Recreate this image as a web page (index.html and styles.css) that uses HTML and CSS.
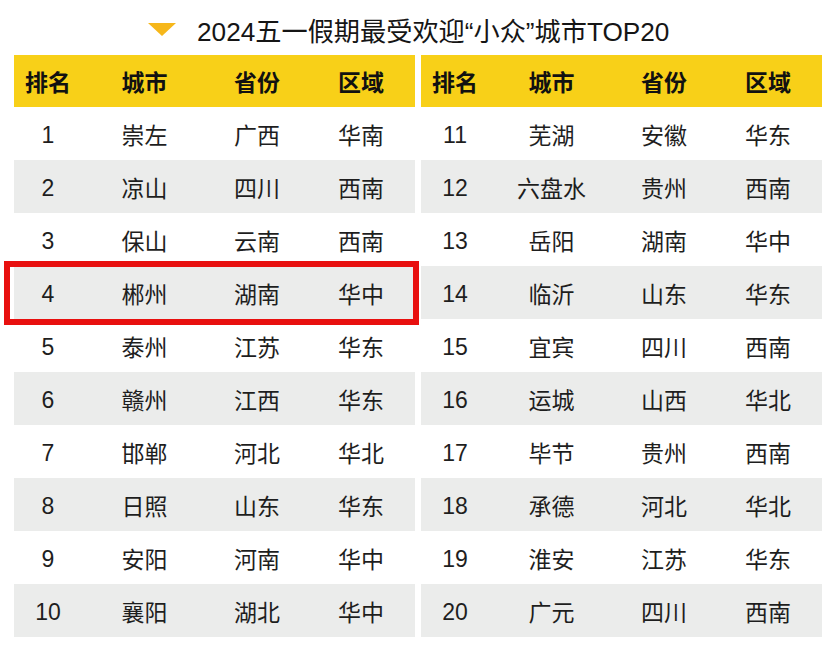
FILE: index.html
```html
<!DOCTYPE html>
<html lang="zh">
<head>
<meta charset="utf-8">
<title>2024五一假期最受欢迎“小众”城市TOP20</title>
<link rel="stylesheet" href="styles.css">
</head>
<body>
<div class="page">
  <h1 class="title"><span class="tri"></span><span class="title-text">2024五一假期最受欢迎“小众”城市TOP20</span></h1>
  <div class="tables">
    <div class="table">
      <div class="row head"><div>排名</div><div>城市</div><div>省份</div><div>区域</div></div>
      <div class="row"><div class="num">1</div><div>崇左</div><div>广西</div><div>华南</div></div>
      <div class="row alt"><div class="num">2</div><div>凉山</div><div>四川</div><div>西南</div></div>
      <div class="row"><div class="num">3</div><div>保山</div><div>云南</div><div>西南</div></div>
      <div class="row alt mark"><div class="num">4</div><div>郴州</div><div>湖南</div><div>华中</div><span class="box"></span></div>
      <div class="row"><div class="num">5</div><div>泰州</div><div>江苏</div><div>华东</div></div>
      <div class="row alt"><div class="num">6</div><div>赣州</div><div>江西</div><div>华东</div></div>
      <div class="row"><div class="num">7</div><div>邯郸</div><div>河北</div><div>华北</div></div>
      <div class="row alt"><div class="num">8</div><div>日照</div><div>山东</div><div>华东</div></div>
      <div class="row"><div class="num">9</div><div>安阳</div><div>河南</div><div>华中</div></div>
      <div class="row alt"><div class="num">10</div><div>襄阳</div><div>湖北</div><div>华中</div></div>
    </div>
    <div class="table">
      <div class="row head"><div>排名</div><div>城市</div><div>省份</div><div>区域</div></div>
      <div class="row"><div class="num">11</div><div>芜湖</div><div>安徽</div><div>华东</div></div>
      <div class="row alt"><div class="num">12</div><div>六盘水</div><div>贵州</div><div>西南</div></div>
      <div class="row"><div class="num">13</div><div>岳阳</div><div>湖南</div><div>华中</div></div>
      <div class="row alt"><div class="num">14</div><div>临沂</div><div>山东</div><div>华东</div></div>
      <div class="row"><div class="num">15</div><div>宜宾</div><div>四川</div><div>西南</div></div>
      <div class="row alt"><div class="num">16</div><div>运城</div><div>山西</div><div>华北</div></div>
      <div class="row"><div class="num">17</div><div>毕节</div><div>贵州</div><div>西南</div></div>
      <div class="row alt"><div class="num">18</div><div>承德</div><div>河北</div><div>华北</div></div>
      <div class="row"><div class="num">19</div><div>淮安</div><div>江苏</div><div>华东</div></div>
      <div class="row alt"><div class="num">20</div><div>广元</div><div>四川</div><div>西南</div></div>
    </div>
  </div>
</div>
</body>
</html>
```
FILE: styles.css
```css
* { box-sizing: border-box; }
html, body { margin: 0; padding: 0; background: #fff; }
body {
  width: 834px;
  height: 648px;
  overflow: hidden;
  font-family: "Liberation Sans", "Noto Sans CJK SC", sans-serif;
  color: #1e1e1e;
}
.page { padding: 0 12px 0 14px; }
.title {
  margin: 0;
  height: 55px;
  display: flex;
  align-items: center;
  padding-left: 134px;
  padding-top: 4px;
  font-weight: 400;
  font-size: 26.2px;
  color: #151515;
}
.tri {
  width: 0;
  height: 0;
  border-left: 14px solid transparent;
  border-right: 14px solid transparent;
  border-top: 13px solid #f6b71a;
  margin-right: 21px;
}
.tables {
  display: flex;
  gap: 6px;
}
.table { width: 401px; }
.row {
  display: grid;
  grid-template-columns: 68px 125px 100px 108px;
  height: 53px;
  align-items: center;
  font-size: 23px;
  position: relative;
}
.row > div { text-align: center; }
.row > .num { padding-top: 3px; }
.row.head {
  height: 52px;
  background: #f8d018;
  font-weight: 700;
  font-size: 23px;
  color: #111;
}
.row.alt { background: #ebeceb; }
.box {
  position: absolute;
  left: -10px;
  top: -5px;
  width: 415px;
  height: 64px;
  border: 6px solid #e8100f;
}
```
